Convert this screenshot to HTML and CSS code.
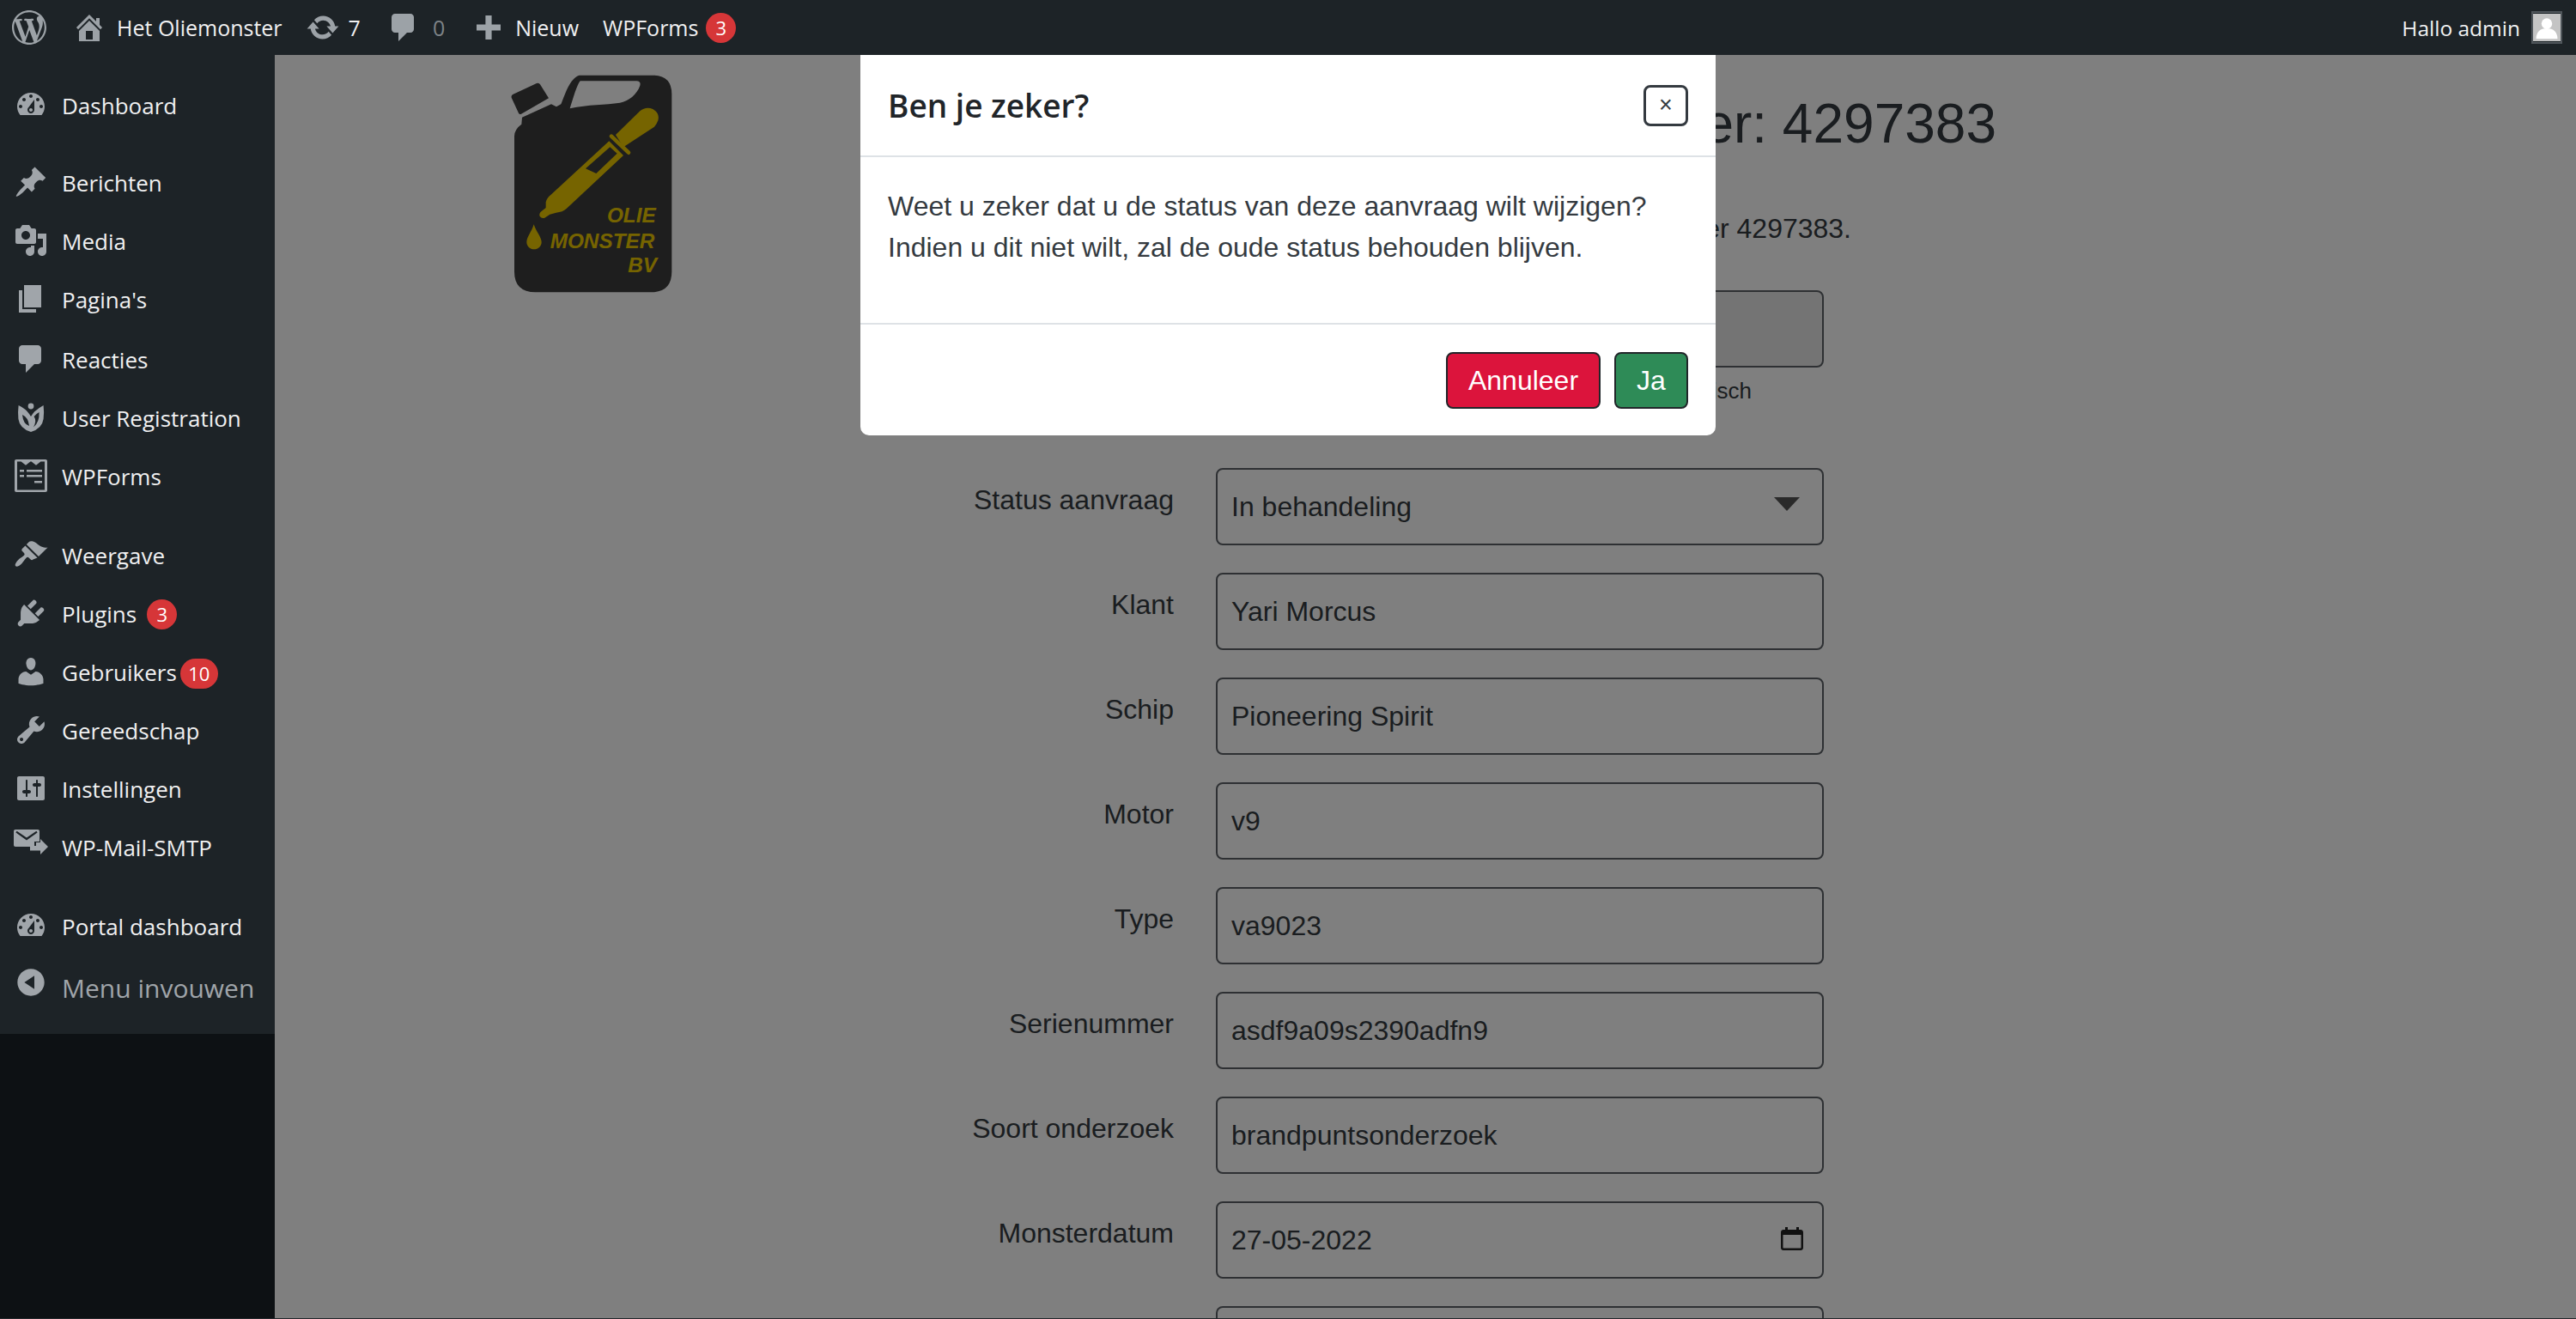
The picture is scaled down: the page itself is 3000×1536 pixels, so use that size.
FILE: index.html
```html
<!DOCTYPE html>
<html lang="nl">
<head>
<meta charset="utf-8">
<title>Het Oliemonster</title>
<link rel="stylesheet" href="styles.css">
</head>
<body>
<header class="adminbar">
  <svg class="bar-logo" viewBox="0 0 20 20"><path d="M20 10c0-5.51-4.49-10-10-10C4.48 0 0 4.49 0 10c0 5.52 4.48 10 10 10 5.51 0 10-4.48 10-10zM7.78 15.37L4.37 6.22c.55-.02 1.17-.08 1.17-.08.5-.06.44-1.13-.06-1.11 0 0-1.45.11-2.37.11-.18 0-.37 0-.58-.01C4.12 2.69 6.87 1.11 10 1.11c2.33 0 4.45.87 6.05 2.34-.68-.11-1.65.39-1.65 1.58 0 .74.45 1.36.9 2.1.35.61.55 1.36.55 2.46 0 1.49-1.4 5-1.4 5l-3.03-8.37c.54-.02.82-.17.82-.17.5-.05.44-1.25-.06-1.22 0 0-1.44.12-2.38.12-.87 0-2.33-.12-2.33-.12-.5-.03-.56 1.2-.06 1.22l.92.08 1.26 3.41zM17.41 10c.24-.64.74-1.87.43-4.25.7 1.29 1.05 2.71 1.05 4.25 0 3.29-1.73 6.24-4.4 7.78.97-2.59 1.94-5.2 2.92-7.78zM6.1 18.09C3.12 16.65 1.11 13.53 1.11 10c0-1.3.23-2.48.72-3.59C3.25 10.3 4.67 14.2 6.1 18.09zm4.03-6.63l2.58 6.98c-.86.29-1.76.45-2.71.45-.79 0-1.57-.11-2.29-.33.81-2.38 1.62-4.74 2.42-7.1z"/></svg>
  <div class="bar-item bar-site">
    <svg class="bar-ico" viewBox="0 0 20 20"><path fill-rule="evenodd" d="M16 8.5l1.53 1.53-1.06 1.06L10 4.62l-6.47 6.47-1.06-1.06L10 2.5l4 4v-2h2v4zm-6-2.46l6 5.99V18H4v-5.97zM12 17v-5H8v5h4z"/></svg>
    <span>Het Oliemonster</span>
  </div>
  <div class="bar-item bar-updates">
    <svg class="bar-ico" viewBox="0 0 20 20"><path d="M10.2 3.28c3.53 0 6.43 2.61 6.92 6h2.08l-3.5 4-3.5-4h2.32c-.45-1.97-2.21-3.45-4.32-3.45-1.45 0-2.73.71-3.54 1.78L4.95 5.66C6.23 4.2 8.11 3.28 10.2 3.28zm-.4 13.44c-3.52 0-6.43-2.61-6.92-6H.8l3.5-4c1.17 1.33 2.33 2.67 3.5 4H5.48c.45 1.97 2.21 3.45 4.32 3.45 1.45 0 2.73-.71 3.54-1.78l1.71 1.95c-1.28 1.46-3.15 2.38-5.25 2.38z"/></svg>
    <span>7</span>
  </div>
  <div class="bar-item bar-comments">
    <svg class="bar-ico" viewBox="0 0 20 20"><path d="M5 2h9c1.1 0 2 .9 2 2v7c0 1.1-.9 2-2 2h-2l-5 5v-5H5c-1.1 0-2-.9-2-2V4c0-1.1.9-2 2-2z"/></svg>
    <span class="muted">0</span>
  </div>
  <div class="bar-item bar-new">
    <svg class="bar-ico" viewBox="0 0 20 20"><path d="M17 8.200v3.600h-5.200V17H8.200v-5.200H3V8.200h5.200V3h3.600v5.200z"/></svg>
    <span>Nieuw</span>
  </div>
  <div class="bar-item bar-forms">
    <span>WPForms</span>
    <span class="badge">3</span>
  </div>
  <div class="bar-user">
    <span>Hallo admin</span>
    <svg class="avatar" viewBox="0 0 36 36"><rect width="36" height="36" fill="#c4c4c4"/><circle cx="18" cy="13" r="7" fill="#fff"/><path d="M4 33c0-9 5-14 14-14s14 5 14 14z" fill="#fff"/></svg>
  </div>
</header>

<div class="layout">
  <nav class="sidebar">
    <ul class="menu">
      <li class="menu-row"><svg class="menu-ico" viewBox="0 0 20 20"><path fill-rule="evenodd" d="M3.76 16h12.48c1.1-1.37 1.76-3.11 1.76-5 0-4.42-3.58-8-8-8s-8 3.58-8 8c0 1.89.66 3.63 1.76 5zM10 4c.55 0 1 .45 1 1s-.45 1-1 1-1-.45-1-1 .45-1 1-1zM6 6c.55 0 1 .45 1 1s-.45 1-1 1-1-.45-1-1 .45-1 1-1zm8 0c.55 0 1 .45 1 1s-.45 1-1 1-1-.45-1-1 .45-1 1-1zm-5.37 5.55L12 7v6c0 1.1-.9 2-2 2s-2-.9-2-2c0-.57.24-1.08.63-1.45zM4 10c.55 0 1 .45 1 1s-.45 1-1 1-1-.45-1-1 .45-1 1-1zm12 0c.55 0 1 .45 1 1s-.45 1-1 1-1-.45-1-1 .45-1 1-1zm-5 3c0-.55-.45-1-1-1s-1 .45-1 1 .45 1 1 1 1-.45 1-1z"/></svg><span>Dashboard</span></li>
      <li class="menu-sep"></li>
      <li class="menu-row nudge"><svg class="menu-ico" viewBox="0 0 20 20"><path d="M10.44 3.02l1.82-1.82 6.36 6.35-1.83 1.82c-1.05-.68-2.48-.57-3.41.36l-.75.75c-.92.93-1.04 2.35-.35 3.41l-1.83 1.82-2.41-2.41-2.8 2.79c-.42.42-3.38 2.71-3.8 2.29s1.86-3.39 2.28-3.81l2.79-2.79L4.1 9.36l1.83-1.82c1.05.69 2.48.57 3.4-.36l.75-.75c.93-.92 1.05-2.35.36-3.41z"/></svg><span>Berichten</span></li>
      <li class="menu-row nudge"><svg class="menu-ico" viewBox="0 0 20 20"><path fill-rule="evenodd" d="M13 11V4c0-.55-.45-1-1-1h-1.67L9 1H5L3.67 3H2c-.55 0-1 .45-1 1v7c0 .55.45 1 1 1h10c.55 0 1-.45 1-1zM7 4.5c1.38 0 2.5 1.12 2.5 2.5S8.38 9.5 7 9.5 4.5 8.38 4.5 7 5.62 4.5 7 4.5zM14 6h5v10.5c0 1.38-1.12 2.5-2.5 2.5S14 17.88 14 16.5s1.12-2.5 2.5-2.5c.17 0 .34.02.5.05V9h-3V6zm-4 8.05V13h2v3.5c0 1.38-1.12 2.5-2.5 2.5S7 17.88 7 16.5 8.12 14 9.5 14c.17 0 .34.02.5.05z"/></svg><span>Media</span></li>
      <li class="menu-row nudge"><svg class="menu-ico" viewBox="0 0 20 20"><path d="M6 15V2h10v13H6zm-1 1h8v2H3V5h2v11z"/></svg><span>Pagina's</span></li>
      <li class="menu-row"><svg class="menu-ico" viewBox="0 0 20 20"><path d="M5 2h9c1.1 0 2 .9 2 2v7c0 1.1-.9 2-2 2h-2l-5 5v-5H5c-1.1 0-2-.9-2-2V4c0-1.1.9-2 2-2z"/></svg><span>Reacties</span></li>
      <li class="menu-row"><svg class="menu-ico" viewBox="0 0 20 20"><circle cx="10" cy="3.500" r="1.700"/><path fill-rule="evenodd" d="M2.800 3Q7 5 9 8L10 9.500Q11 8 12 6.800 14.500 4.500 17.300 3 17.800 7 17.300 11 16.500 16.500 10 18.500 3.500 16.500 2.700 11 2.300 7 2.800 3zM5 8.500Q8.500 10 9 15 5.500 14 5 8.500zM14.800 7Q15 13 11.500 15.800 13.500 12 11.800 9.500 13 8 14.800 7z"/></svg><span>User Registration</span></li>
      <li class="menu-row"><svg class="menu-ico" viewBox="0 0 20 20"><path fill-rule="evenodd" d="M1.500 .5h17c.6 0 1 .4 1 1v17c0 .6-.4 1-1 1h-17c-.6 0-1-.4-1-1v-17c0-.6.4-1 1-1zm.5 1.300v16.400h16V1.800h-2.300L13 3.900 10.300 1.800h-.6L7 3.900 4.300 1.800H2zM3.500 6.500h2.500v1.300H3.500zm4 0h9v1.300h-9zM3.500 9.500h2.500v1.300H3.500zm4 0h9v1.300h-9zM12 13h4.500v1.300H12z"/></svg><span>WPForms</span></li>
      <li class="menu-sep"></li>
      <li class="menu-row"><svg class="menu-ico" viewBox="0 0 20 20"><path d="M14.480 11.060L7.410 3.990l1.500-1.500c.5-.56 2.300-.47 3.510.32 1.210.8 1.430 1.280 2.910 2.100 1.180.64 2.450 1.260 4.450.85zm-.71.71L6.700 4.700 4.930 6.470c-.39.390-.39 1.020 0 1.410l1.060 1.060c.39.390.39 1.030 0 1.420-.6.6-1.430 1.110-2.210 1.690-.35.26-.7.53-1.010.84-1.340 1.340-2.370 3.020-1.670 3.720.7.7 2.380-.33 3.720-1.670.31-.31.58-.66.84-1.010.58-.78 1.090-1.610 1.690-2.210.39-.39 1.030-.39 1.420 0l1.060 1.060c.39.39 1.020.39 1.410 0z"/></svg><span>Weergave</span></li>
      <li class="menu-row"><svg class="menu-ico" viewBox="0 0 20 20"><path d="M13.110 4.360L9.870 7.600 8 5.730l3.240-3.240c.35-.34 1.050-.2 1.560.32.52.51.66 1.210.31 1.550zm-8 1.770l.91-1.120 9.010 9.010-1.190.84c-.71.71-2.630 1.160-3.820 1.160H6.140L4.900 17.260c-.59.59-1.540.59-2.120 0-.59-.58-.59-1.530 0-2.120l1.240-1.240v-3.880c0-1.130.4-3.190 1.090-3.890zm7.260 3.970l3.240-3.240c.34-.35 1.040-.21 1.550.31.52.51.66 1.210.31 1.550l-3.240 3.250z"/></svg><span>Plugins</span><span class="badge badge-plugins">3</span></li>
      <li class="menu-row"><svg class="menu-ico" viewBox="0 0 20 20"><path d="M10 9.250c-2.270 0-2.730-3.440-2.730-3.440C7 4.020 7.820 2 9.970 2c2.160 0 2.980 2.020 2.710 3.810 0 0-.41 3.440-2.680 3.440zm0 2.570L12.720 10c2.390 0 4.520 2.330 4.520 4.530v2.490s-3.650 1.130-7.240 1.130c-3.650 0-7.240-1.130-7.240-1.130v-2.490c0-2.250 1.940-4.480 4.470-4.480z"/></svg><span>Gebruikers</span><span class="badge badge-users">10</span></li>
      <li class="menu-row"><svg class="menu-ico" viewBox="0 0 20 20"><path fill-rule="evenodd" d="M16.680 9.770c-1.340 1.340-3.300 1.670-4.950.99l-5.410 6.520c-.99.99-2.590.99-3.580 0s-.99-2.590 0-3.570l6.520-5.420c-.68-1.650-.35-3.610.99-4.950 1.280-1.280 3.120-1.620 4.720-1.060l-2.890 2.890 2.820 2.820 2.860-2.870c.53 1.580.18 3.390-1.080 4.650zM3.810 16.210c.4.39 1.040.39 1.430 0 .4-.4.4-1.040 0-1.430-.39-.4-1.030-.4-1.430 0-.39.39-.39 1.030 0 1.430z"/></svg><span>Gereedschap</span></li>
      <li class="menu-row"><svg class="menu-ico" viewBox="0 0 20 20"><path fill-rule="evenodd" d="M18 16V4c0-.55-.45-1-1-1H3c-.55 0-1 .45-1 1v12c0 .55.45 1 1 1h14c.55 0 1-.45 1-1zM8 11h1c.55 0 1 .45 1 1s-.45 1-1 1H8v1.500c0 .28-.22.5-.5.5s-.5-.22-.5-.5V13H6c-.55 0-1-.45-1-1s.45-1 1-1h1V5.500c0-.28.22-.5.5-.5s.5.22.5.5V11zm5-2h-1c-.55 0-1-.45-1-1s.45-1 1-1h1V5.500c0-.28.22-.5.5-.5s.5.22.5.5V7h1c.55 0 1 .45 1 1s-.45 1-1 1h-1v5.500c0 .28-.22.5-.5.5s-.5-.22-.5-.5V9z"/></svg><span>Instellingen</span></li>
      <li class="menu-row"><svg class="menu-ico ico-mail" viewBox="0 0 20 20"><path fill-rule="evenodd" d="M1 1.500h13c.6 0 1 .4 1 1v6h-3v3H1c-.6 0-1-.4-1-1v-8c0-.6.4-1 1-1zm.2 1.800l6.300 4.400 6.300-4.400-.6-.9-5.700 3.900-5.700-3.900z"/><path d="M13 9h2.500V7l4.500 4.500-4.500 4.500v-2.200H9.500V11H13z"/></svg><span>WP-Mail-SMTP</span></li>
      <li class="menu-sep"></li>
      <li class="menu-row"><svg class="menu-ico" viewBox="0 0 20 20"><path fill-rule="evenodd" d="M3.760 16h12.480c1.100-1.370 1.760-3.110 1.760-5 0-4.420-3.580-8-8-8s-8 3.580-8 8c0 1.890.66 3.630 1.760 5zM10 4c.55 0 1 .45 1 1s-.45 1-1 1-1-.45-1-1 .45-1 1-1zM6 6c.55 0 1 .45 1 1s-.45 1-1 1-1-.45-1-1 .45-1 1-1zm8 0c.55 0 1 .45 1 1s-.45 1-1 1-1-.45-1-1 .45-1 1-1zm-5.370 5.550L12 7v6c0 1.100-.9 2-2 2s-2-.9-2-2c0-.57.24-1.080.63-1.450zM4 10c.55 0 1 .45 1 1s-.45 1-1 1-1-.45-1-1 .45-1 1-1zm12 0c.55 0 1 .45 1 1s-.45 1-1 1-1-.45-1-1 .45-1 1-1zm-5 3c0-.55-.45-1-1-1s-1 .45-1 1 .45 1 1 1 1-.45 1-1z"/></svg><span>Portal dashboard</span></li>
      <li class="menu-row menu-collapse"><svg class="menu-ico" viewBox="0 0 20 20"><path fill-rule="evenodd" d="M10 2.160c4.330 0 7.840 3.510 7.840 7.840s-3.510 7.840-7.840 7.840S2.160 14.330 2.160 10 5.710 2.160 10 2.160zm2 11.720V6.120L6.180 9.970z"/></svg><span>Menu invouwen</span></li>
    </ul>
  </nav>

  <main class="main">
    <div class="logo-col">
      <svg class="logo" viewBox="105 80 565 762">
        <path fill="#3c3c3c" d="M106 160q-2-8 6-12l82-38q8-3 12 4l30 48-96 55q-6 3-9-3z"/>
        <path fill-rule="evenodd" fill="#3c3c3c" d="M360 82h240q66 0 66 66v620q0 72-72 72H190q-74 0-74-72V295q0-24 25-42l2-24 102-46 18 9 16-9c15-35 30-90 64-101zm-14 20c-12 14-25 62-36 96 65-15 125-12 175-20 30-5 60-30 70-60q4-15-12-16z"/>
        <path fill="#ecc900" d="M470 290L555 207Q575 190 600 200 625 215 618 240 615 250 605 262L497 333z"/>
        <path fill="none" stroke="#ecc900" stroke-width="14" stroke-linecap="round" d="M455 295L515 352"/>
        <path fill="#ecc900" fill-rule="evenodd" d="M447 312L497 362 298 548Q285 560 262 562L240 568 222 580Q212 584 205 575 201 566 210 558L226 545 226 525Q230 510 243 500zM450 333L365 408 402 425 475 355z"/>
        <path fill="#ecc900" d="M184 603c8 25 27 45 27 62 0 14-12 25-26 25s-26-11-26-25c0-18 18-37 25-62z"/>
        <text class="logo-text" x="610" y="597">OLIE</text>
        <text class="logo-text" x="606" y="685">MONSTER</text>
        <text class="logo-text" x="614" y="771">BV</text>
      </svg>
    </div>
    <div class="form-col">
      <h1 class="title">Aanvraagnummer: 4297383</h1>
      <p class="lead">U bewerkt de aanvraag met aanvraagnummer 4297383.</p>
      <form class="form">
        <div class="row row-first">
          <label class="label">Aanvraagnummer</label>
          <div>
            <input class="field field-disabled" disabled>
            <div class="hint">automatisch</div>
          </div>
        </div>
        <div class="row">
          <label class="label">Status aanvraag</label>
          <div class="select"><span>In behandeling</span></div>
        </div>
        <div class="row"><label class="label">Klant</label><input class="field" value="Yari Morcus"></div>
        <div class="row"><label class="label">Schip</label><input class="field" value="Pioneering Spirit"></div>
        <div class="row"><label class="label">Motor</label><input class="field" value="v9"></div>
        <div class="row"><label class="label">Type</label><input class="field" value="va9023"></div>
        <div class="row"><label class="label">Serienummer</label><input class="field" value="asdf9a09s2390adfn9"></div>
        <div class="row"><label class="label">Soort onderzoek</label><input class="field" value="brandpuntsonderzoek"></div>
        <div class="row">
          <label class="label">Monsterdatum</label>
          <div class="date">
            <input class="field" value="27-05-2022">
            <svg class="cal" viewBox="0 0 26 27"><path fill-rule="evenodd" d="M5 0h3v3h10V0h3v3h2c1.700 0 3 1.300 3 3v18c0 1.700-1.300 3-3 3H3c-1.700 0-3-1.300-3-3V6c0-1.700 1.300-3 3-3h2zM2.500 9v15c0 .3.200.5.500.5h20c.3 0 .5-.2.5-.5V9z"/></svg>
          </div>
        </div>
        <div class="row"><label class="label"></label><input class="field"></div>
      </form>
    </div>
  </main>
</div>

<div class="backdrop">
  <section class="modal">
    <div class="modal-head">
      <h2>Ben je zeker?</h2>
      <button class="close" type="button">×</button>
    </div>
    <div class="modal-body">
      <p>Weet u zeker dat u de status van deze aanvraag wilt wijzigen?<br>Indien u dit niet wilt, zal de oude status behouden blijven.</p>
    </div>
    <div class="modal-foot">
      <button class="btn btn-red" type="button">Annuleer</button>
      <button class="btn btn-green" type="button">Ja</button>
    </div>
  </section>
</div>
</body>
</html>
```

FILE: styles.css
```css
* { box-sizing: border-box; }
html, body { margin: 0; height: 1536px; overflow: hidden; background: #fff; }
html::after { content: ""; position: fixed; left: 0; right: 0; bottom: 0; height: 1px; background: #23282c; z-index: 40; }
body { font-family: "Liberation Sans", Arial, sans-serif; color: #343a40; font-size: 32px; }

.adminbar {
  position: relative; z-index: 30; height: 64px; background: #1d2327; color: #f0f0f1;
  display: flex; align-items: center;
  font-family: "Open Sans", "Noto Sans", sans-serif; font-size: 25px;
}
.bar-logo { width: 40px; height: 40px; fill: #9ca2a7; margin-left: 14px; }
.bar-item { display: flex; align-items: center; }
.bar-ico { width: 40px; height: 40px; fill: #9ca2a7; flex: none; }
.bar-site { margin-left: 30px; gap: 12px; }
.bar-updates { margin-left: 27px; gap: 10px; }
.bar-comments { margin-left: 30px; gap: 14px; }
.bar-new { margin-left: 31px; gap: 11px; }
.bar-forms { margin-left: 28px; gap: 9px; }
.muted { color: #7e8387; }
.badge {
  display: inline-flex; align-items: center; justify-content: center;
  min-width: 35px; height: 35px; padding: 0 6px; border-radius: 18px;
  background: #d63638; color: #fff; font-size: 22px; line-height: 1;
}
.bar-user { margin-left: auto; display: flex; align-items: center; gap: 13px; padding-right: 16px; font-size: 24.5px; }
.avatar { width: 36px; height: 38px; border: 2px solid #50565b; display: block; }

.layout { display: flex; height: 1472px; }
.sidebar { position: relative; z-index: 30; width: 320px; flex: none; background: #0d1114; font-family: "Open Sans", "Noto Sans", sans-serif; }
.menu { list-style: none; margin: 0; padding: 25px 0 18px; background: #1d2327; height: 1140px; }
.menu-row { height: 68px; display: flex; align-items: center; padding-left: 16px; color: #f0f0f1; font-size: 26px; }
.nudge { padding-bottom: 4px; }
.menu-sep { height: 24px; }
.menu-ico { width: 40px; height: 40px; fill: #a0a5aa; flex: none; margin: 0 16px 3px 0; }
.ico-mail { margin-bottom: 8px; }
.menu-collapse { height: 74px; color: #a0a5aa; font-size: 30px; }
.menu-collapse .menu-ico { margin-bottom: 12px; }
.badge-plugins { margin: 0 0 0 12px; }
.badge-users { margin: 2px 0 0 4px; min-width: 44px; }

.main { flex: 1; display: flex; background: #fff; }
.logo-col { width: 780px; flex: none; padding: 23px 0 0 275px; }
.logo { width: 189px; height: 254px; display: block; }
.logo-text { font: italic bold 73px "Liberation Sans", Arial, sans-serif; fill: #ecc900; text-anchor: end; }
.form-col { width: 1222px; flex: none; padding-top: 42px; }
.title { margin: 0 -3px 0 0; font-size: 64px; font-weight: 400; line-height: 77px; text-align: right; }
.lead { margin: 59px 166px 48px 0; line-height: 48px; text-align: right; }
.form { display: flex; flex-direction: column; gap: 32px; }
.row { display: grid; grid-template-columns: 267px 708px; column-gap: 49px; align-items: start; }
.row-first { margin-bottom: 38px; }
.label { text-align: right; line-height: 48px; padding-top: 13px; }
.field, .select {
  display: block; width: 708px; height: 90px; padding: 1px 16px 0;
  border: 2px solid #5c6166; border-radius: 8px; background: #fff;
  font: 32px "Liberation Sans", Arial, sans-serif; color: #343a40; outline: none;
}
.field-disabled { background: #e9e9e9; }
.hint { text-align: right; padding-right: 84px; font-size: 26px; line-height: 39px; margin-top: 8px; }
.select { position: relative; display: flex; align-items: center; }
.select::after {
  content: ""; position: absolute; right: 26px; top: 32px;
  border-left: 15px solid transparent; border-right: 15px solid transparent; border-top: 16px solid #555;
}
.date { position: relative; }
.cal { position: absolute; right: 24px; top: 30px; width: 26px; height: 27px; fill: #222; }

.backdrop {
  position: fixed; inset: 0; z-index: 20; background: rgba(0,0,0,.5);
  display: flex; justify-content: center; align-items: flex-start; padding-top: 64px;
}
.modal { width: 996px; height: 443px; background: #fff; border-radius: 0 0 10px 10px; display: flex; flex-direction: column; }
.modal-head {
  height: 119px; padding: 0 32px; display: flex; align-items: center; justify-content: space-between;
  border-bottom: 2px solid #dee2e6;
}
.modal-head h2 { margin: 0; font: 600 37px "Open Sans", "Noto Sans", sans-serif; color: #212529; }
.close {
  width: 52px; height: 48px; padding: 0; border: 3px solid #343a40; border-radius: 8px; background: #fff;
  font: 27px "Liberation Sans", Arial, sans-serif; color: #343a40;
}
.modal-body { height: 193px; padding: 33px 32px 0; }
.modal-body p { margin: 0; line-height: 48px; }
.modal-foot { flex: 1; border-top: 2px solid #dee2e6; display: flex; justify-content: flex-end; gap: 16px; padding: 32px 32px 0; }
.btn { height: 66px; border: 2px solid #212529; border-radius: 8px; color: #fff; font: 32px "Liberation Sans", Arial, sans-serif; padding: 0; }
.btn-red { width: 180px; background: #dc143c; }
.btn-green { width: 86px; background: #2e8b57; }
```
